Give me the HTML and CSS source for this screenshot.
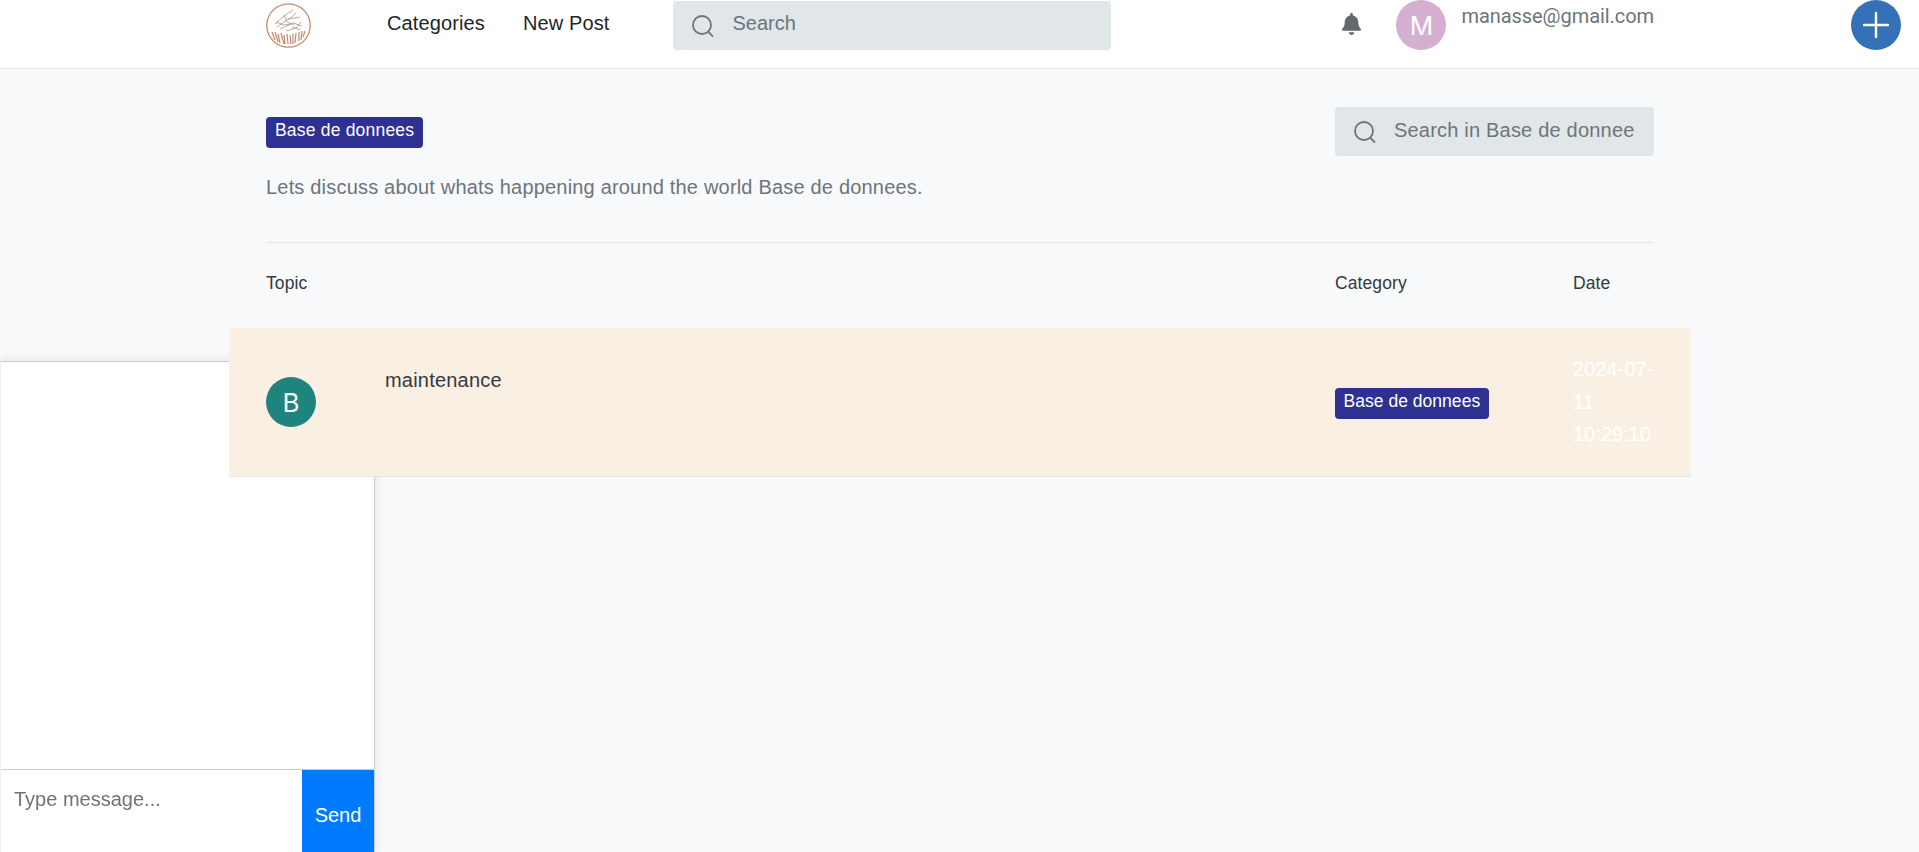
FILE: index.html
```html
<!DOCTYPE html>
<html lang="en">
<head>
    <meta charset="UTF-8">
    <meta name="viewport" content="width=device-width, initial-scale=1.0">
    <title>Base de donnees</title>
    <link rel="stylesheet" href="styles.css">
</head>
<body>
    <!-- Top bar -->
    <header class="topbar">
        <div class="topbar-inner">
            <svg class="logo" viewBox="0 0 45 45" fill="none" stroke="#c58a68">
                <circle cx="22.5" cy="22.5" r="21.7" stroke-width="1.3"/>
                <g stroke="#a89484" stroke-width="0.8">
                    <path d="M9 21l9-8 9-6M11 24l11-8 12-2M18 12l3 7 7 3M14 26l13-6 9 3M22 17l8-7M20 28l10-3 5-6M26 24l8 3M10 19l8 3 7-1"/>
                </g>
                <g stroke="#c58a68" stroke-width="1.2">
                    <path d="M6 29l3 8M9 29l3 10M12 31l2 9M15 30l3 11M18 32l1 9M21 31l1 10M24 32l1 9M27 31l0 10M30 30l-1 10M33 29l0 9M36 28l-1 9M39 28l-2 6"/>
                </g>
            </svg>

            <nav class="main-nav">
                <a href="#">Categories</a>
                <a href="#">New Post</a>
            </nav>

            <div class="search-box search-main">
                <svg class="search-icon" viewBox="0 0 22 22" fill="none" stroke="#6c757d" stroke-width="1.8">
                    <circle cx="10" cy="10" r="9"/>
                    <path d="M16.5 17l4.5 4.6"/>
                </svg>
                <input type="text" placeholder="Search">
            </div>

            <div class="user-area">
                <svg class="bell" viewBox="0 0 448 512" fill="#636a6e">
                    <path d="M224 512c35 0 64-29 64-64H160c0 35 29 64 64 64zm215-150c-19-21-55-52-55-154 0-78-54-140-127-155V32a32 32 0 1 0-66 0v21C118 68 64 130 64 208c0 102-36 133-55 154-6 6-9 14-9 22 0 16 13 32 32 32h384c19 0 32-16 32-32 0-8-3-16-9-22z"/>
                </svg>
                <div class="avatar avatar-user">M</div>
                <span class="user-email">manasse@gmail.com</span>
            </div>
        </div>
    </header>

    <button class="add-btn">
        <svg viewBox="0 0 28 28" stroke="#fff" stroke-width="2.4" stroke-linecap="round">
            <path d="M14 2v24M2 14h24"/>
        </svg>
    </button>

    <!-- Category page -->
    <main class="content">
        <div class="category-head">
            <div class="category-info">
                <span class="badge">Base de donnees</span>
                <p class="category-desc">Lets discuss about whats happening around the world Base de donnees.</p>
            </div>
            <div class="search-box search-category">
                <svg class="search-icon" viewBox="0 0 22 22" fill="none" stroke="#6c757d" stroke-width="1.8">
                    <circle cx="10" cy="10" r="9"/>
                    <path d="M16.5 17l4.5 4.6"/>
                </svg>
                <input type="text" placeholder="Search in Base de donnees">
            </div>
        </div>

        <div class="topic-table">
            <div class="topic-cols topic-labels">
                <div>Topic</div>
                <div>Category</div>
                <div>Date</div>
            </div>
            <div class="topic-cols topic-row">
                <div class="topic-main">
                    <div class="avatar avatar-topic">B</div>
                    <a href="#" class="topic-title">maintenance</a>
                </div>
                <div class="topic-cat"><span class="badge">Base de donnees</span></div>
                <div class="topic-date">2024-07-11 10:29:10</div>
            </div>
        </div>
    </main>

    <!-- Chat box -->
    <div class="chat-box">
        <div class="chat-messages"></div>
        <form class="chat-form">
            <input type="text" placeholder="Type message...">
            <button type="button">Send</button>
        </form>
    </div>
</body>
</html>
```

FILE: styles.css
```css
* {
    margin: 0;
    padding: 0;
    box-sizing: border-box;
}

body {
    font-family: "Liberation Sans", Arial, sans-serif;
    font-size: 20px;
    line-height: 33px;
    background: #f8f9fb;
    color: #343a40;
    min-height: 100vh;
    overflow: hidden;
}

a {
    color: inherit;
    text-decoration: none;
}

input {
    font-family: inherit;
    font-size: 20px;
    border: none;
    outline: none;
    background: none;
    color: #495057;
}

input::placeholder {
    color: #6c757d;
    opacity: 1;
}

/* Top bar */
.topbar {
    height: 69px;
    background: #fff;
    border-bottom: 1px solid #e3e8ec;
}

.topbar-inner {
    width: 1388px;
    margin-left: 266px;
    display: flex;
    align-items: flex-start;
}

.logo {
    width: 45px;
    height: 45px;
    margin-top: 3px;
    flex-shrink: 0;
}

.main-nav {
    display: flex;
    gap: 38px;
    margin-left: 76px;
    padding-top: 7px;
    color: #212529;
    letter-spacing: 0.12px;
}

.search-box {
    display: flex;
    align-items: center;
    height: 49px;
    background: #e1e6e8;
    border-radius: 4px;
    overflow: hidden;
}

.search-box input {
    flex: 1;
    min-width: 0;
    height: 100%;
    padding: 0 20px 2px 0;
}

.search-icon {
    width: 22px;
    height: 22px;
    flex-shrink: 0;
    margin: 0 18px 0 19px;
}

.search-main {
    width: 438px;
    margin: 1px 0 0 64px;
}

.search-main input {
    padding-bottom: 4px;
}

.user-area {
    display: flex;
    align-items: flex-start;
    margin-left: auto;
}

.bell {
    width: 19px;
    height: 22px;
    margin: 13px 35px 0 0;
}

.avatar {
    width: 50px;
    height: 50px;
    border-radius: 50%;
    color: #fff;
    font-family: Inter, sans-serif;
    font-size: 26px;
    display: flex;
    align-items: center;
    justify-content: center;
    flex-shrink: 0;
}

.avatar-user {
    background: #d4afcf;
}

.user-email {
    font-family: Roboto, sans-serif;
    color: #6c757d;
    margin-left: 15px;
    letter-spacing: -0.06px;
}

.add-btn {
    position: fixed;
    top: 0;
    left: 1851px;
    width: 50px;
    height: 50px;
    border: none;
    border-radius: 50%;
    background: #3571b8;
    display: flex;
    align-items: center;
    justify-content: center;
}

.add-btn svg {
    width: 28px;
    height: 28px;
}

/* Category page */
.content {
    width: 1388px;
    margin-left: 266px;
    padding-top: 38px;
}

.category-head {
    display: flex;
    justify-content: space-between;
    align-items: flex-start;
    height: 136px;
    border-bottom: 1px solid #e3e5e8;
}

.category-info {
    padding-top: 10px;
}

.badge {
    display: block;
    width: fit-content;
    background: #2e3192;
    color: #fff;
    font-size: 17.5px;
    line-height: 27px;
    padding: 0 9px 4px;
    border-radius: 4px;
    letter-spacing: 0.2px;
}

.category-desc {
    color: #6c757d;
    margin-top: 23px;
    letter-spacing: 0.19px;
}

.search-category {
    width: 319px;
}

.search-category input {
    letter-spacing: 0.2px;
}

.topic-cols {
    display: grid;
    grid-template-columns: 1069px 238px 81px;
}

.topic-labels {
    font-size: 17.5px;
    padding-top: 24px;
    height: 85px;
    letter-spacing: 0.1px;
}

.topic-row {
    position: relative;
    z-index: 2;
    margin: 0 -37px;
    padding: 0 37px;
    height: 149px;
    background: #f9efe3;
    border-bottom: 1px solid #e3e5e8;
    align-items: center;
}

.topic-main {
    display: flex;
    align-items: flex-start;
    height: 100%;
}

.avatar-topic {
    background: #20847e;
    margin-top: 49px;
}

.topic-title {
    margin: 36px 0 0 69px;
    letter-spacing: 0.2px;
}

.topic-cat .badge {
    margin-top: 3px;
    padding: 0 8.5px 4px;
    letter-spacing: 0.03px;
}

.topic-date {
    color: #fff;
    line-height: 32.6px;
}

/* Chat box */
.chat-box {
    position: fixed;
    left: 0;
    bottom: 0;
    z-index: 1;
    width: 375px;
    height: 491px;
    background: #fff;
    border: 1px solid #ccc;
    border-left-color: #eee;
    border-bottom: none;
    box-shadow: 0 0 10px rgba(0, 0, 0, 0.1);
    display: flex;
    flex-direction: column;
}

.chat-messages {
    flex: 1;
}

.chat-form {
    display: flex;
    height: 83px;
    border-top: 1px solid #ccc;
}

.chat-form input {
    flex: 1;
    min-width: 0;
    height: 58px;
    padding: 0 13px;
}

.chat-form button {
    width: 72px;
    border: none;
    background: #007bff;
    color: #fff;
    font-family: inherit;
    font-size: 20px;
    padding-top: 8px;
}
```
